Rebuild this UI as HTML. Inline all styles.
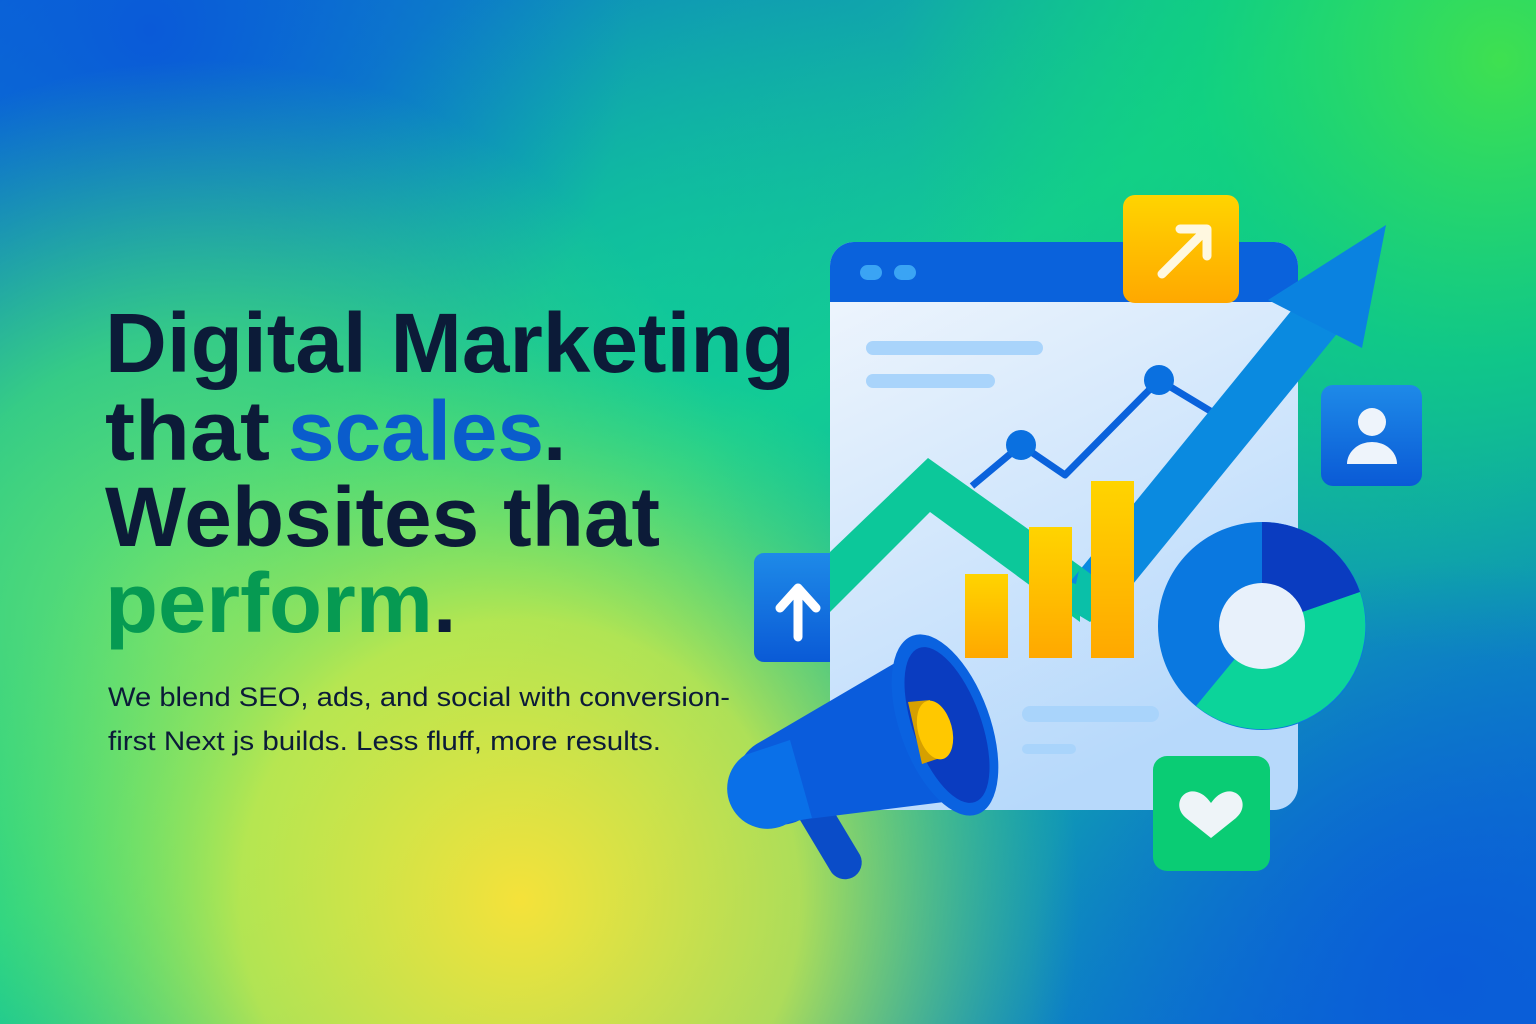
<!DOCTYPE html>
<html><head><meta charset="utf-8"><style>
html,body{margin:0;padding:0;width:1536px;height:1024px;overflow:hidden}
svg{display:block}
</style></head><body>
<svg width="1536" height="1024" viewBox="0 0 1536 1024" xmlns="http://www.w3.org/2000/svg">
<defs>
<linearGradient id="bg" x1="0" y1="0" x2="1" y2="1">
<stop offset="0" stop-color="#0a62d8"/>
<stop offset="0.45" stop-color="#14cc92"/>
<stop offset="1" stop-color="#0a66d8"/>
</linearGradient>
<radialGradient id="yel" cx="520" cy="900" r="560" gradientUnits="userSpaceOnUse">
<stop offset="0" stop-color="#f5e23a"/>
<stop offset="0.5" stop-color="#c9e84a" stop-opacity="0.85"/>
<stop offset="1" stop-color="#5ee06a" stop-opacity="0"/>
</radialGradient>
<radialGradient id="grn" cx="1500" cy="60" r="600" gradientUnits="userSpaceOnUse">
<stop offset="0" stop-color="#3fe050"/>
<stop offset="0.5" stop-color="#10d47a" stop-opacity="0.7"/>
<stop offset="1" stop-color="#10d47a" stop-opacity="0"/>
</radialGradient>
<radialGradient id="gl" cx="200" cy="620" r="560" gradientUnits="userSpaceOnUse">
<stop offset="0" stop-color="#6ee070"/>
<stop offset="0.5" stop-color="#40dc78" stop-opacity="0.8"/>
<stop offset="1" stop-color="#30d880" stop-opacity="0"/>
</radialGradient>
<radialGradient id="mid" cx="650" cy="330" r="380" gradientUnits="userSpaceOnUse">
<stop offset="0" stop-color="#10cc98" stop-opacity="0.8"/>
<stop offset="1" stop-color="#10cc98" stop-opacity="0"/>
</radialGradient>
<radialGradient id="br" cx="1450" cy="980" r="420" gradientUnits="userSpaceOnUse">
<stop offset="0" stop-color="#0a5cd8"/>
<stop offset="1" stop-color="#0a5cd8" stop-opacity="0"/>
</radialGradient>
<radialGradient id="tl" cx="150" cy="30" r="480" gradientUnits="userSpaceOnUse">
<stop offset="0" stop-color="#0a5ad8"/>
<stop offset="1" stop-color="#0a70d8" stop-opacity="0"/>
</radialGradient>
<linearGradient id="page" x1="0" y1="0" x2="0.4" y2="1">
<stop offset="0" stop-color="#f2f7fd"/>
<stop offset="1" stop-color="#b7d9fb"/>
</linearGradient>
<linearGradient id="yb" x1="0" y1="0" x2="0" y2="1">
<stop offset="0" stop-color="#ffd400"/>
<stop offset="1" stop-color="#ffa800"/>
</linearGradient>
<linearGradient id="bb" x1="0" y1="0" x2="0" y2="1">
<stop offset="0" stop-color="#1e8ae8"/>
<stop offset="1" stop-color="#0a5ad6"/>
</linearGradient>
</defs>
<rect width="1536" height="1024" fill="url(#bg)"/>
<rect width="1536" height="1024" fill="url(#mid)"/>
<rect width="1536" height="1024" fill="url(#tl)"/>
<rect width="1536" height="1024" fill="url(#grn)"/>
<rect width="1536" height="1024" fill="url(#gl)"/>
<rect width="1536" height="1024" fill="url(#yel)"/>
<rect width="1536" height="1024" fill="url(#br)"/>

<g font-family="Liberation Sans, sans-serif" font-weight="700" font-size="84">
<text x="105" y="372" fill="#0c1b38" textLength="690" lengthAdjust="spacingAndGlyphs">Digital Marketing</text>
<text x="105" y="460" fill="#0c1b38" textLength="165" lengthAdjust="spacingAndGlyphs">that</text>
<text x="288" y="460" fill="#0a5ccc" textLength="256" lengthAdjust="spacingAndGlyphs">scales</text>
<text x="543" y="460" fill="#0c1b38">.</text>
<text x="105" y="546" fill="#0c1b38" textLength="555" lengthAdjust="spacingAndGlyphs">Websites that</text>
<text x="105" y="632" fill="#069a52" textLength="328" lengthAdjust="spacingAndGlyphs">perform</text>
<text x="433" y="632" fill="#0c1b38">.</text>
</g>
<g font-family="Liberation Sans, sans-serif" font-size="27" fill="#0c1b38">
<text x="108" y="706" textLength="622" lengthAdjust="spacingAndGlyphs">We blend SEO, ads, and social with conversion-</text>
<text x="108" y="750" textLength="553" lengthAdjust="spacingAndGlyphs">first Next js builds. Less fluff, more results.</text>
</g>

<rect x="830" y="242" width="468" height="568" rx="24" fill="url(#page)"/>
<path d="M854 242 H1274 A24 24 0 0 1 1298 266 V302 H830 V266 A24 24 0 0 1 854 242Z" fill="#0a62dc"/>
<rect x="860" y="265" width="22" height="15" rx="7.5" fill="#3aa4f4"/>
<rect x="894" y="265" width="22" height="15" rx="7.5" fill="#3aa4f4"/>
<rect x="866" y="341" width="177" height="14" rx="7" fill="#a9d4fb"/>
<rect x="866" y="374" width="129" height="14" rx="7" fill="#a9d4fb"/>
<rect x="1022" y="706" width="137" height="16" rx="8" fill="#a9d4fb"/>
<rect x="1022" y="744" width="54" height="10" rx="5" fill="#a9d4fb"/>

<polyline points="972,486 1021,445 1065,475 1159,380 1212,412" fill="none" stroke="#0a62dc" stroke-width="7" stroke-linejoin="round"/>
<circle cx="1021" cy="445" r="15" fill="#0a70e0"/>
<circle cx="1159" cy="380" r="15" fill="#0a70e0"/>

<path d="M830 552 L928 458 L1080 566 L1080 622 L930 512 L830 612Z" fill="#0cc89a"/>
<path d="M1070 582 L1300 300 L1340 330 L1120 600 Z" fill="#0a8ae0"/>
<path d="M1080 566 L1120 596 L1090 622 L1070 610Z" fill="#0ac0a8"/>
<path d="M1268 300 L1386 225 L1362 348Z" fill="#0a82e0"/>

<rect x="965" y="574" width="43" height="84" fill="url(#yb)"/>
<rect x="1029" y="527" width="43" height="131" fill="url(#yb)"/>
<rect x="1091" y="481" width="43" height="177" fill="url(#yb)"/>

<g transform="translate(1262,626)">
<circle r="104" fill="#0a78e0"/>
<path d="M0 0 L0 -104 A104 104 0 0 1 98 -34 Z" fill="#0a3cc0"/>
<path d="M0 0 L98 -34 A104 104 0 0 1 -66 80 Z" fill="#0cd49a"/>
<circle r="43" fill="#e8f1fb"/>
</g>

<rect x="1123" y="195" width="116" height="108" rx="12" fill="url(#yb)"/>
<path d="M1162 274 L1205 231 M1180 229 H1207 V256" fill="none" stroke="#fff8e0" stroke-width="9" stroke-linecap="round" stroke-linejoin="round"/>

<rect x="1321" y="385" width="101" height="101" rx="12" fill="url(#bb)"/>
<circle cx="1372" cy="422" r="14" fill="#eef4fb"/>
<path d="M1347 464 A25 22 0 0 1 1397 464 Z" fill="#eef4fb"/>

<path d="M754 564 A10 10 0 0 1 764 553 H830 V662 H764 A10 10 0 0 1 754 652Z" fill="url(#bb)"/>
<path d="M798 637 V595 M780 608 L798 588 L816 608" fill="none" stroke="#fff" stroke-width="9" stroke-linecap="round" stroke-linejoin="round"/>

<rect x="1153" y="756" width="117" height="115" rx="14" fill="#0acc74"/>
<path d="M1211 838 L1186 818 C1172 806 1182 788 1197 792 C1204 794 1208 799 1211 803 C1214 799 1218 794 1225 792 C1240 788 1250 806 1236 818Z" fill="#eef4f8"/>

<path d="M800 820 L830 870 A16 16 0 0 0 860 855 L830 805Z" fill="#0a4cc8"/>
<path d="M760 742 L900 660 L960 800 L800 820 A38 38 0 0 1 760 742Z" fill="#0a5cdc"/>
<path d="M745 755 A38 38 0 0 0 790 822 L812 818 L790 740Z" fill="#0a70e8"/>
<ellipse cx="945" cy="725" rx="45" ry="95" transform="rotate(-20 945 725)" fill="#0a62e0"/>
<ellipse cx="947" cy="725" rx="34" ry="82" transform="rotate(-20 947 725)" fill="#0a3cc0"/>
<path d="M908 702 L930 700 L940 758 L922 764Z" fill="#d6a000"/>
<ellipse cx="935" cy="730" rx="17" ry="30" transform="rotate(-15 935 730)" fill="#ffc800"/>
</svg>
</body></html>
